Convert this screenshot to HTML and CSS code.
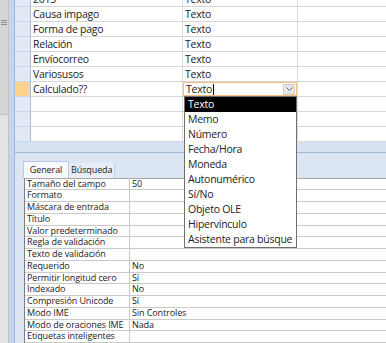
FILE: index.html
```html
<!DOCTYPE html>
<html lang="es">
<head>
    <meta charset="UTF-8">
    <title>Diseño de tabla</title>
    <link rel="stylesheet" href="styles.css">
</head>
<body>
    <div class="app">
        <div class="nav">
            <div class="thumb">
                <svg class="grip" width="6" height="6" viewBox="0 0 6 6">
                    <path d="M0 0.5H6M0 2.5H6M0 4.5H6" stroke="#8d8d8d" stroke-width="1"/>
                </svg>
            </div>
        </div>
        <div class="frame"></div>

        <div class="main">
            <div class="fields">
                <div class="fields-inner">
                    <div class="row"><div class="sel"></div><div class="cell">2015</div><div class="cell">Texto</div><div class="cell"></div></div>
                    <div class="row"><div class="sel"></div><div class="cell">Causa impago</div><div class="cell">Texto</div><div class="cell"></div></div>
                    <div class="row"><div class="sel"></div><div class="cell">Forma de pago</div><div class="cell">Texto</div><div class="cell"></div></div>
                    <div class="row"><div class="sel"></div><div class="cell">Relación</div><div class="cell">Texto</div><div class="cell"></div></div>
                    <div class="row"><div class="sel"></div><div class="cell">Envíocorreo</div><div class="cell">Texto</div><div class="cell"></div></div>
                    <div class="row"><div class="sel"></div><div class="cell">Variosusos</div><div class="cell">Texto</div><div class="cell"></div></div>
                    <div class="row current">
                        <div class="sel"></div>
                        <div class="cell">Calculado??</div>
                        <div class="cell editing">
                            <span>Texto</span><span class="caret"></span>
                            <span class="drop-btn">
                                <svg width="7" height="4" viewBox="0 0 7 4"><path d="M0.5 0.5L3.5 3.5L6.5 0.5" fill="none" stroke="#666" stroke-width="1"/></svg>
                            </span>
                        </div>
                        <div class="cell"></div>
                    </div>
                    <div class="row"><div class="sel"></div><div class="cell"></div><div class="cell"></div><div class="cell"></div></div>
                    <div class="row"><div class="sel"></div><div class="cell"></div><div class="cell"></div><div class="cell"></div></div>
                    <div class="row"><div class="sel"></div><div class="cell"></div><div class="cell"></div><div class="cell"></div></div>
                </div>
            </div>

            <div class="splitter"></div>

            <div class="props">
                <div class="tabs">
                    <div class="tab active">General</div>
                    <div class="tab">Búsqueda</div>
                </div>
                <div class="prop-grid">
                    <div class="prop"><span>Tamaño del campo</span><span>50</span></div>
                    <div class="prop"><span>Formato</span><span></span></div>
                    <div class="prop"><span>Máscara de entrada</span><span></span></div>
                    <div class="prop"><span>Título</span><span></span></div>
                    <div class="prop"><span>Valor predeterminado</span><span></span></div>
                    <div class="prop"><span>Regla de validación</span><span></span></div>
                    <div class="prop"><span>Texto de validación</span><span></span></div>
                    <div class="prop"><span>Requerido</span><span>No</span></div>
                    <div class="prop"><span>Permitir longitud cero</span><span>Sí</span></div>
                    <div class="prop"><span>Indexado</span><span>No</span></div>
                    <div class="prop"><span>Compresión Unicode</span><span>Sí</span></div>
                    <div class="prop"><span>Modo IME</span><span>Sin Controles</span></div>
                    <div class="prop"><span>Modo de oraciones IME</span><span>Nada</span></div>
                    <div class="prop"><span>Etiquetas inteligentes</span><span></span></div>
                </div>
            </div>

            <ul class="type-list">
                <li class="selected">Texto</li>
                <li>Memo</li>
                <li>Número</li>
                <li>Fecha/Hora</li>
                <li>Moneda</li>
                <li>Autonumérico</li>
                <li>Sí/No</li>
                <li>Objeto OLE</li>
                <li>Hipervínculo</li>
                <li>Asistente para búsque</li>
            </ul>
        </div>
    </div>
</body>
</html>
```

FILE: styles.css
```css
* {
    margin: 0;
    padding: 0;
    box-sizing: border-box;
}

body {
    font-family: 'Open Sans', sans-serif;
    color: #222;
    background: #fff;
    width: 386px;
    height: 343px;
    overflow: hidden;
}

.app {
    display: flex;
    height: 343px;
}

/* navigation pane scrollbar */
.nav {
    width: 9px;
    background: #e4e4e4;
    border-right: 1px solid #c2c2c2;
}

.thumb {
    height: 115px;
    background: #d5d5d5;
    border-bottom: 1px solid #c4c4c4;
    padding: 20px 0 0 1px;
}

.grip {
    display: block;
}

.frame {
    width: 6px;
    background: #c3d6ee;
    border-right: 1px solid #9cb8dd;
}

.main {
    flex: 1;
    position: relative;
    display: flex;
    flex-direction: column;
    min-width: 0;
}

/* field list */
.fields {
    height: 142px;
    overflow: hidden;
}

.fields-inner {
    margin-top: -8px;
}

.row {
    display: grid;
    grid-template-columns: 16px 152px 115px 1fr;
    height: 15px;
    font-size: 10.5px;
    letter-spacing: -0.25px;
}

.sel {
    background: #e1e9f5;
    border-right: 1px solid #a9bdd9;
    border-bottom: 1px solid #c8d5e7;
}

.cell {
    border-right: 1px solid #dcdcdc;
    border-bottom: 1px solid #d6d6d6;
    padding-left: 2px;
    line-height: 14px;
    white-space: nowrap;
    overflow-x: clip;
}

.row .cell:last-child {
    border-right: none;
}

.current .sel {
    background: #fcd48e;
}

.editing {
    display: flex;
    align-items: center;
    box-shadow: inset 0 0 0 1px #f3c07a;
    padding-left: 3px;
}

.caret {
    width: 1px;
    height: 11px;
    background: #000;
    margin-left: 1px;
}

.drop-btn {
    margin-left: auto;
    margin-right: 2px;
    width: 12px;
    height: 11px;
    background: #e6e6e6;
    border: 1px solid #cdcdcd;
    display: flex;
    align-items: center;
    justify-content: center;
}

/* data type dropdown */
.type-list {
    list-style: none;
    position: absolute;
    left: 169px;
    top: 96px;
    width: 113px;
    background: #fff;
    border: 1px solid #6f6f6f;
    font-size: 10.5px;
    letter-spacing: -0.25px;
}

.type-list li {
    height: 15px;
    line-height: 15px;
    padding-left: 3px;
    white-space: nowrap;
    overflow-x: clip;
}

.type-list .selected {
    background: #000;
    color: #fff;
}

.splitter {
    height: 11px;
    background: #d6e2f2;
    border-bottom: 1px solid #a2b7d4;
}

/* field properties */
.props {
    flex: 1;
    background: #dce6f3;
    padding-left: 8px;
}

.tabs {
    height: 25px;
    display: flex;
    align-items: flex-end;
    font-size: 9px;
    letter-spacing: -0.1px;
}

.tab {
    height: 15px;
    padding: 0 2px;
    line-height: 14px;
    background: #e7eef8;
    border-right: 1px solid #c3d0e2;
}

.tab.active {
    height: 17px;
    width: 46px;
    text-align: center;
    background: #f7f9fc;
    border: 1px solid #b9c8dc;
    border-bottom: none;
    line-height: 16px;
}

.prop-grid {
    background: #fff;
    border-top: 1px solid #a8a8a8;
    border-left: 1px solid #7e7e7e;
    margin-left: 1px;
}

.prop {
    display: grid;
    grid-template-columns: 105px 1fr;
    height: 11.75px;
    border-bottom: 1px solid #c9c9c9;
    font-size: 9px;
    letter-spacing: -0.1px;
    line-height: 10.5px;
}

.prop span {
    padding-left: 2px;
    white-space: nowrap;
}

.prop span:first-child {
    border-right: 1px solid #c9c9c9;
}
```
